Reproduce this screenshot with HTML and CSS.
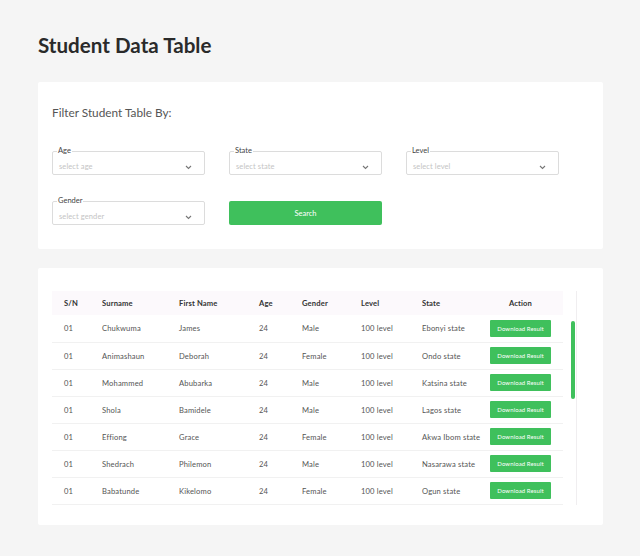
FILE: index.html
```html
<!DOCTYPE html>
<html lang="en">
<head>
<meta charset="utf-8">
<title>Student Data Table</title>
<link rel="stylesheet" href="styles.css">
</head>
<body>
<main class="page">
  <h1 class="title">Student Data Table</h1>

  <section class="card filter-card">
    <h2 class="filter-title">Filter Student Table By:</h2>
    <div class="filter-grid">
      <fieldset class="select">
        <legend>Age</legend>
        <div class="select-inner"><span class="placeholder">select age</span>
          <svg class="chev" width="7" height="5" viewBox="0 0 7 5"><path d="M1 1l2.5 2.5L6 1" fill="none" stroke="#777" stroke-width="1.1"/></svg></div>
      </fieldset>
      <fieldset class="select">
        <legend>State</legend>
        <div class="select-inner"><span class="placeholder">select state</span>
          <svg class="chev" width="7" height="5" viewBox="0 0 7 5"><path d="M1 1l2.5 2.5L6 1" fill="none" stroke="#777" stroke-width="1.1"/></svg></div>
      </fieldset>
      <fieldset class="select">
        <legend>Level</legend>
        <div class="select-inner"><span class="placeholder">select level</span>
          <svg class="chev" width="7" height="5" viewBox="0 0 7 5"><path d="M1 1l2.5 2.5L6 1" fill="none" stroke="#777" stroke-width="1.1"/></svg></div>
      </fieldset>
      <fieldset class="select">
        <legend>Gender</legend>
        <div class="select-inner"><span class="placeholder">select gender</span>
          <svg class="chev" width="7" height="5" viewBox="0 0 7 5"><path d="M1 1l2.5 2.5L6 1" fill="none" stroke="#777" stroke-width="1.1"/></svg></div>
      </fieldset>
      <button class="search-btn" type="button">Search</button>
    </div>
  </section>

  <section class="card table-card">
    <div class="table-wrap">
      <table class="data">
        <colgroup>
          <col class="c-sn"><col class="c-sur"><col class="c-first"><col class="c-age"><col class="c-gender"><col class="c-level"><col class="c-state"><col class="c-action">
        </colgroup>
        <thead>
          <tr><th>S/N</th><th>Surname</th><th>First Name</th><th>Age</th><th>Gender</th><th>Level</th><th>State</th><th class="center">Action</th></tr>
        </thead>
        <tbody>
          <tr><td>01</td><td>Chukwuma</td><td>James</td><td>24</td><td>Male</td><td>100 level</td><td>Ebonyi state</td><td class="center"><button class="dl-btn" type="button">Download Result</button></td></tr>
          <tr><td>01</td><td>Animashaun</td><td>Deborah</td><td>24</td><td>Female</td><td>100 level</td><td>Ondo state</td><td class="center"><button class="dl-btn" type="button">Download Result</button></td></tr>
          <tr><td>01</td><td>Mohammed</td><td>Abubarka</td><td>24</td><td>Male</td><td>100 level</td><td>Katsina state</td><td class="center"><button class="dl-btn" type="button">Download Result</button></td></tr>
          <tr><td>01</td><td>Shola</td><td>Bamidele</td><td>24</td><td>Male</td><td>100 level</td><td>Lagos state</td><td class="center"><button class="dl-btn" type="button">Download Result</button></td></tr>
          <tr><td>01</td><td>Effiong</td><td>Grace</td><td>24</td><td>Female</td><td>100 level</td><td>Akwa Ibom state</td><td class="center"><button class="dl-btn" type="button">Download Result</button></td></tr>
          <tr><td>01</td><td>Shedrach</td><td>Philemon</td><td>24</td><td>Male</td><td>100 level</td><td>Nasarawa state</td><td class="center"><button class="dl-btn" type="button">Download Result</button></td></tr>
          <tr><td>01</td><td>Babatunde</td><td>Kikelomo</td><td>24</td><td>Female</td><td>100 level</td><td>Ogun state</td><td class="center"><button class="dl-btn" type="button">Download Result</button></td></tr>
        </tbody>
      </table>
      <div class="scrollbar"><div class="thumb"></div></div>
    </div>
  </section>
</main>
</body>
</html>
```

FILE: styles.css
```css
* { box-sizing: border-box; }
html, body { margin: 0; padding: 0; }
body {
  background: #f5f5f5;
  font-family: Lato, "Open Sans", Arial, sans-serif;
  color: #333;
}
.page {
  width: 565px;
  margin-left: 38px;
  padding-top: 33px;
  padding-bottom: 33px;
}
.title {
  margin: 0;
  font-size: 20.6px;
  line-height: 24px;
  font-weight: 700;
  color: #2a2a2a;
}
.card {
  background: #fff;
  border-radius: 2px;
}
.filter-card {
  margin-top: 25px;
  padding: 23px 14px 24px 14px;
}
.filter-title {
  margin: 0;
  font-size: 11.8px;
  line-height: 16px;
  font-weight: 400;
  color: #555;
}
.filter-grid {
  margin-top: 25px;
  display: grid;
  grid-template-columns: 153px 153px 153px;
  column-gap: 24px;
  row-gap: 21px;
  align-items: end;
}
.select {
  margin: 0;
  padding: 0 12px 0 6px;
  border: 1px solid #dcdcdc;
  border-radius: 2px;
  min-width: 0;
  height: 29px;
}
.select legend {
  font-size: 7.5px;
  line-height: 10px;
  color: #444;
  padding: 0 1px;
  margin-left: -2px;
}
.select-inner {
  display: flex;
  align-items: center;
  justify-content: space-between;
  height: 18px;
  padding-top: 3px;
}
.placeholder {
  font-size: 7.5px;
  color: #c4c4c4;
  letter-spacing: 0.1px;
}
.chev { display: block; margin-top: 2px; }
.search-btn {
  height: 24px;
  border: none;
  border-radius: 2px;
  background: #3fc05c;
  color: #fff;
  font-family: inherit;
  font-size: 7.5px;
  padding: 0;
}
.table-card {
  margin-top: 19px;
  padding: 23px 26px 20px 14px;
}
.table-wrap {
  display: flex;
}
.data {
  width: 511px;
  table-layout: fixed;
  border-collapse: collapse;
  font-size: 7.6px;
  letter-spacing: 0.15px;
}
.c-sn { width: 38px; }
.c-sur { width: 77px; }
.c-first { width: 80px; }
.c-age { width: 43px; }
.c-gender { width: 59px; }
.c-level { width: 61px; }
.c-state { width: 68px; }
.c-action { width: 85px; }
.data th {
  height: 24px;
  background: #fcf9fc;
  text-align: left;
  font-weight: 700;
  color: #333;
  padding: 0 0 1px 12px;
}
.data td {
  height: 27px;
  padding: 0 0 0 12px;
  color: #555;
  border-bottom: 1px solid #f1f1f1;
  white-space: nowrap;
}
.data .center { text-align: center; padding-left: 0; }
.dl-btn {
  width: 61px;
  height: 17px;
  border: none;
  border-radius: 1px;
  background: #3fc05c;
  color: #fff;
  font-family: inherit;
  font-size: 6px;
  letter-spacing: 0.1px;
  padding: 0;
  vertical-align: middle;
}
.scrollbar {
  width: 14px;
  border-right: 1px solid #f0eef0;
  display: flex;
  justify-content: flex-end;
  padding-right: 1px;
}
.thumb {
  width: 4px;
  height: 78px;
  margin-top: 30px;
  border-radius: 2px;
  background: #3fc05c;
}
```
